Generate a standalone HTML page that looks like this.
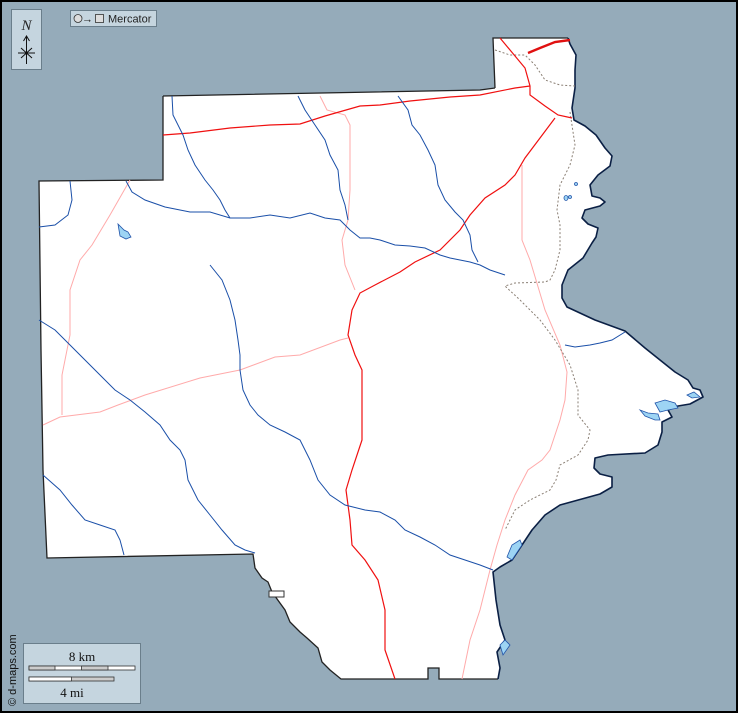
<!DOCTYPE html>
<html><head><meta charset="utf-8"><style>
html,body{margin:0;padding:0;background:#000;}
svg{display:block;}
</style></head><body>
<svg width="738" height="713" viewBox="0 0 738 713" xmlns="http://www.w3.org/2000/svg">
<rect x="0" y="0" width="738" height="713" fill="#000"/>
<rect x="2" y="2" width="734" height="709" fill="#95abba"/>
<!-- land -->
<path d="M163,96 L163,180 L39,181 L41,350 L43,470 L47,558 L253,554 L255,568 L262,578 L268,582 L272,592 L285,610 L290,622 L300,632 L307,638 L318,648 L322,662 L330,670 L341,679 L428,679 L428,668 L439,668 L439,679 L498,679 L500,668 L497,652 L505,640 L500,625 L496,600 L493,572 L500,567 L512,560 L522,545 L532,530 L545,515 L560,505 L600,494 L612,487 L612,477 L600,474 L594,468 L595,458 L608,455 L645,453 L658,445 L662,432 L662,422 L672,417 L668,410 L678,406 L690,404 L703,397 L700,390 L693,388 L688,380 L675,372 L660,360 L645,348 L625,331 L595,320 L567,307 L562,298 L562,285 L568,270 L583,258 L592,243 L596,237 L598,228 L588,224 L582,218 L585,210 L600,206 L605,202 L600,198 L592,196 L590,185 L598,175 L610,166 L612,156 L605,148 L596,135 L585,126 L574,120 L572,108 L575,88 L575,70 L576,55 L570,44 L568,38 L493,38 L495,88 L480,90 Z" fill="#fff" stroke="none"/>
<!-- outline: inland black, coast dark navy -->
<path d="M495,88 L493,38 L568,38 M163,96 L163,180 L39,181 L41,350 L43,470 L47,558 L253,554 L255,568 L262,578 L268,582 L272,592 L285,610 L290,622 L300,632 L307,638 L318,648 L322,662 L330,670 L341,679 L428,679 L428,668 L439,668 L439,679 L498,679 M163,96 L480,90 L495,88" fill="none" stroke="#222" stroke-width="1.3"/>
<path d="M498,679 L500,668 L497,652 L505,640 L500,625 L496,600 L493,572 L500,567 L512,560 L522,545 L532,530 L545,515 L560,505 L600,494 L612,487 L612,477 L600,474 L594,468 L595,458 L608,455 L645,453 L658,445 L662,432 L662,422 L672,417 L668,410 L678,406 L690,404 L703,397 L700,390 L693,388 L688,380 L675,372 L660,360 L645,348 L625,331 L595,320 L567,307 L562,298 L562,285 L568,270 L583,258 L592,243 L596,237 L598,228 L588,224 L582,218 L585,210 L600,206 L605,202 L600,198 L592,196 L590,185 L598,175 L610,166 L612,156 L605,148 L596,135 L585,126 L574,120 L572,108 L575,88 L575,70 L576,55 L570,44 L568,38" fill="none" stroke="#0a1f44" stroke-width="1.6" stroke-linejoin="round"/>
<rect x="269" y="591" width="15" height="6" fill="#fff" stroke="#333" stroke-width="1"/>
<!-- lakes -->
<g fill="#9dd4f4" stroke="#2255aa" stroke-width="0.8">
<path d="M118,224 L124,230 L128,232 L131,237 L126,239 L120,236 L119,230 Z"/>
<path d="M507,557 L512,545 L520,540 L522,545 L512,560 Z"/>
<path d="M655,403 L665,400 L675,403 L678,408 L668,410 L660,412 Z"/>
<path d="M640,410 L645,416 L655,420 L660,420 L658,414 L648,413 Z"/>
<path d="M687,395 L694,392 L700,397 L692,398 Z"/>
<path d="M500,645 L505,640 L510,645 L503,655 Z"/>
<ellipse cx="566" cy="198" rx="2" ry="2.5"/><ellipse cx="570" cy="197" rx="1.5" ry="1.5"/><ellipse cx="576" cy="184" rx="1.5" ry="1.5"/>
</g>
<!-- minor roads -->
<g fill="none" stroke="#ffaaaa" stroke-width="1">
<path d="M130,180 L110,215 L92,245 L80,260 L70,290 L70,335 L62,375 L62,415"/>
<path d="M43,425 L60,417 L100,412 L118,405 L145,395 L200,378 L240,370 L275,357 L300,355 L340,340 L348,338"/>
<path d="M320,96 L327,110 L345,115 L350,125 L350,190 L348,220 L342,240 L345,265 L355,290"/>
<path d="M522,165 L522,200 L522,240 L530,260 L545,310 L560,345 L567,372 L565,400 L560,420 L550,450 L542,460 L528,470 L515,495 L505,520 L497,545 L490,570 L480,610 L470,640 L462,679"/>
</g>
<!-- dotted boundary -->
<g fill="none" stroke="#8a7f74" stroke-width="1" stroke-dasharray="2,2">
<path d="M495,50 L510,55 L525,55 L535,65 L545,80 L560,85 L575,86"/>
<path d="M570,112 L575,145 L570,165 L560,185 L557,210 L560,225 L560,250 L555,270 L550,280 L545,282 L515,283 L505,286 L520,300 L540,320 L555,340 L570,365 L578,390 L578,415 L590,430 L588,440 L578,455 L560,465 L556,480 L550,490 L530,500 L515,510 L505,530"/>
</g>
<!-- main roads -->
<g fill="none" stroke="#f01010" stroke-width="1.2">
<path d="M163,135 L190,133 L230,128 L270,125 L300,124 L325,116 L360,106 L380,105 L410,101 L450,97 L480,95 L515,88 L530,86"/>
<path d="M500,38 L525,68 L530,86 L530,95 L545,106 L558,115 L572,118"/>
<path d="M555,118 L540,138 L525,158 L515,175 L505,185 L485,198 L470,215 L460,230 L440,250 L415,262 L400,272 L375,285 L360,293 L352,310 L348,335 L355,355 L362,370 L362,400 L362,440 L352,470 L346,490 L350,520 L352,545 L365,560 L378,580 L385,610 L385,650 L395,679"/>
</g>
<path d="M528,53 L540,48 L555,42 L570,40" fill="none" stroke="#e01010" stroke-width="2.4"/>
<!-- rivers -->
<g fill="none" stroke="#1a4fa8" stroke-width="1">
<path d="M172,96 L173,115 L183,135 L188,150 L195,165 L205,180 L213,190 L220,200 L225,210 L230,218"/>
<path d="M126,181 L132,192 L145,200 L165,207 L190,212 L210,212 L230,218 L250,218 L270,215 L290,218 L310,213 L325,218 L340,220 L350,230 L360,238 L370,238 L380,240 L395,245 L410,246 L425,248 L440,255 L450,258 L470,262 L480,265 L490,270 L505,275"/>
<path d="M298,96 L305,110 L315,125 L325,140 L330,155 L338,170 L340,190 L345,205 L348,220"/>
<path d="M398,96 L408,110 L412,125 L420,135 L428,150 L435,165 L438,185 L445,200 L455,212 L463,220 L470,235 L472,250 L478,262"/>
<path d="M70,181 L72,200 L68,215 L55,225 L39,227"/>
<path d="M210,265 L222,280 L230,300 L235,320 L238,340 L240,355 L240,370 L243,390 L250,405 L258,415 L270,425 L285,432 L300,440 L310,460 L318,480 L330,495 L345,505 L365,510 L380,512 L395,520 L405,530 L420,537 L435,545 L450,555 L465,560 L480,565 L493,570"/>
<path d="M39,320 L55,330 L70,345 L85,360 L100,375 L115,390 L130,400 L145,412 L160,425 L170,440 L180,450 L185,460 L188,480 L198,500 L210,515 L222,530 L235,545 L245,550 L255,553"/>
<path d="M43,475 L60,490 L72,505 L85,520 L100,525 L115,530 L120,540 L124,555"/>
<path d="M565,345 L575,347 L590,345 L600,343 L612,340 L625,332"/>
</g>
<!-- compass box -->
<rect x="11.5" y="9.5" width="30" height="60" fill="#c5d5df" stroke="#6a7e8b"/>
<text x="26.5" y="30" font-family="Liberation Serif,serif" font-style="italic" font-size="15" text-anchor="middle" fill="#222">N</text>
<path d="M26.5,64 L26.5,36 M23.5,41 L26.5,36 L29.5,41 M18,53 L35,53 M21,48 L32,58 M21,58 L32,48" stroke="#111" stroke-width="1" fill="none"/>
<!-- Mercator -->
<rect x="70.5" y="10.5" width="86" height="16" fill="#c5d5df" stroke="#6a7e8b"/>
<circle cx="78" cy="18.5" r="4" fill="#ddd" stroke="#333" stroke-width="0.8"/>
<text x="82" y="22.5" font-family="Liberation Sans,sans-serif" font-size="11" fill="#222">→</text>
<rect x="95.5" y="14.5" width="8" height="8" fill="#ddd" stroke="#333" stroke-width="0.8"/>
<text x="108" y="22.5" font-family="Liberation Sans,sans-serif" font-size="11" fill="#222">Mercator</text>
<!-- scale -->
<rect x="23.5" y="643.5" width="117" height="60" fill="#c5d5df" stroke="#6a7e8b"/>
<text x="82" y="661" font-family="Liberation Serif,serif" font-size="13" text-anchor="middle" fill="#111">8 km</text>
<rect x="29" y="666" width="106" height="4" fill="#fff" stroke="#333" stroke-width="0.8"/>
<rect x="29" y="666" width="26" height="4" fill="#ccc" stroke="#333" stroke-width="0.8"/>
<rect x="81.5" y="666" width="26.5" height="4" fill="#ccc" stroke="#333" stroke-width="0.8"/>
<rect x="29" y="677" width="85" height="4" fill="#ccc" stroke="#333" stroke-width="0.8"/>
<rect x="29" y="677" width="42.5" height="4" fill="#fff" stroke="#333" stroke-width="0.8"/>
<text x="72" y="697" font-family="Liberation Serif,serif" font-size="13" text-anchor="middle" fill="#111">4 mi</text>
<text transform="translate(16,706) rotate(-90)" font-family="Liberation Sans,sans-serif" font-size="11" fill="#111">© d-maps.com</text>
</svg>
</body></html>
